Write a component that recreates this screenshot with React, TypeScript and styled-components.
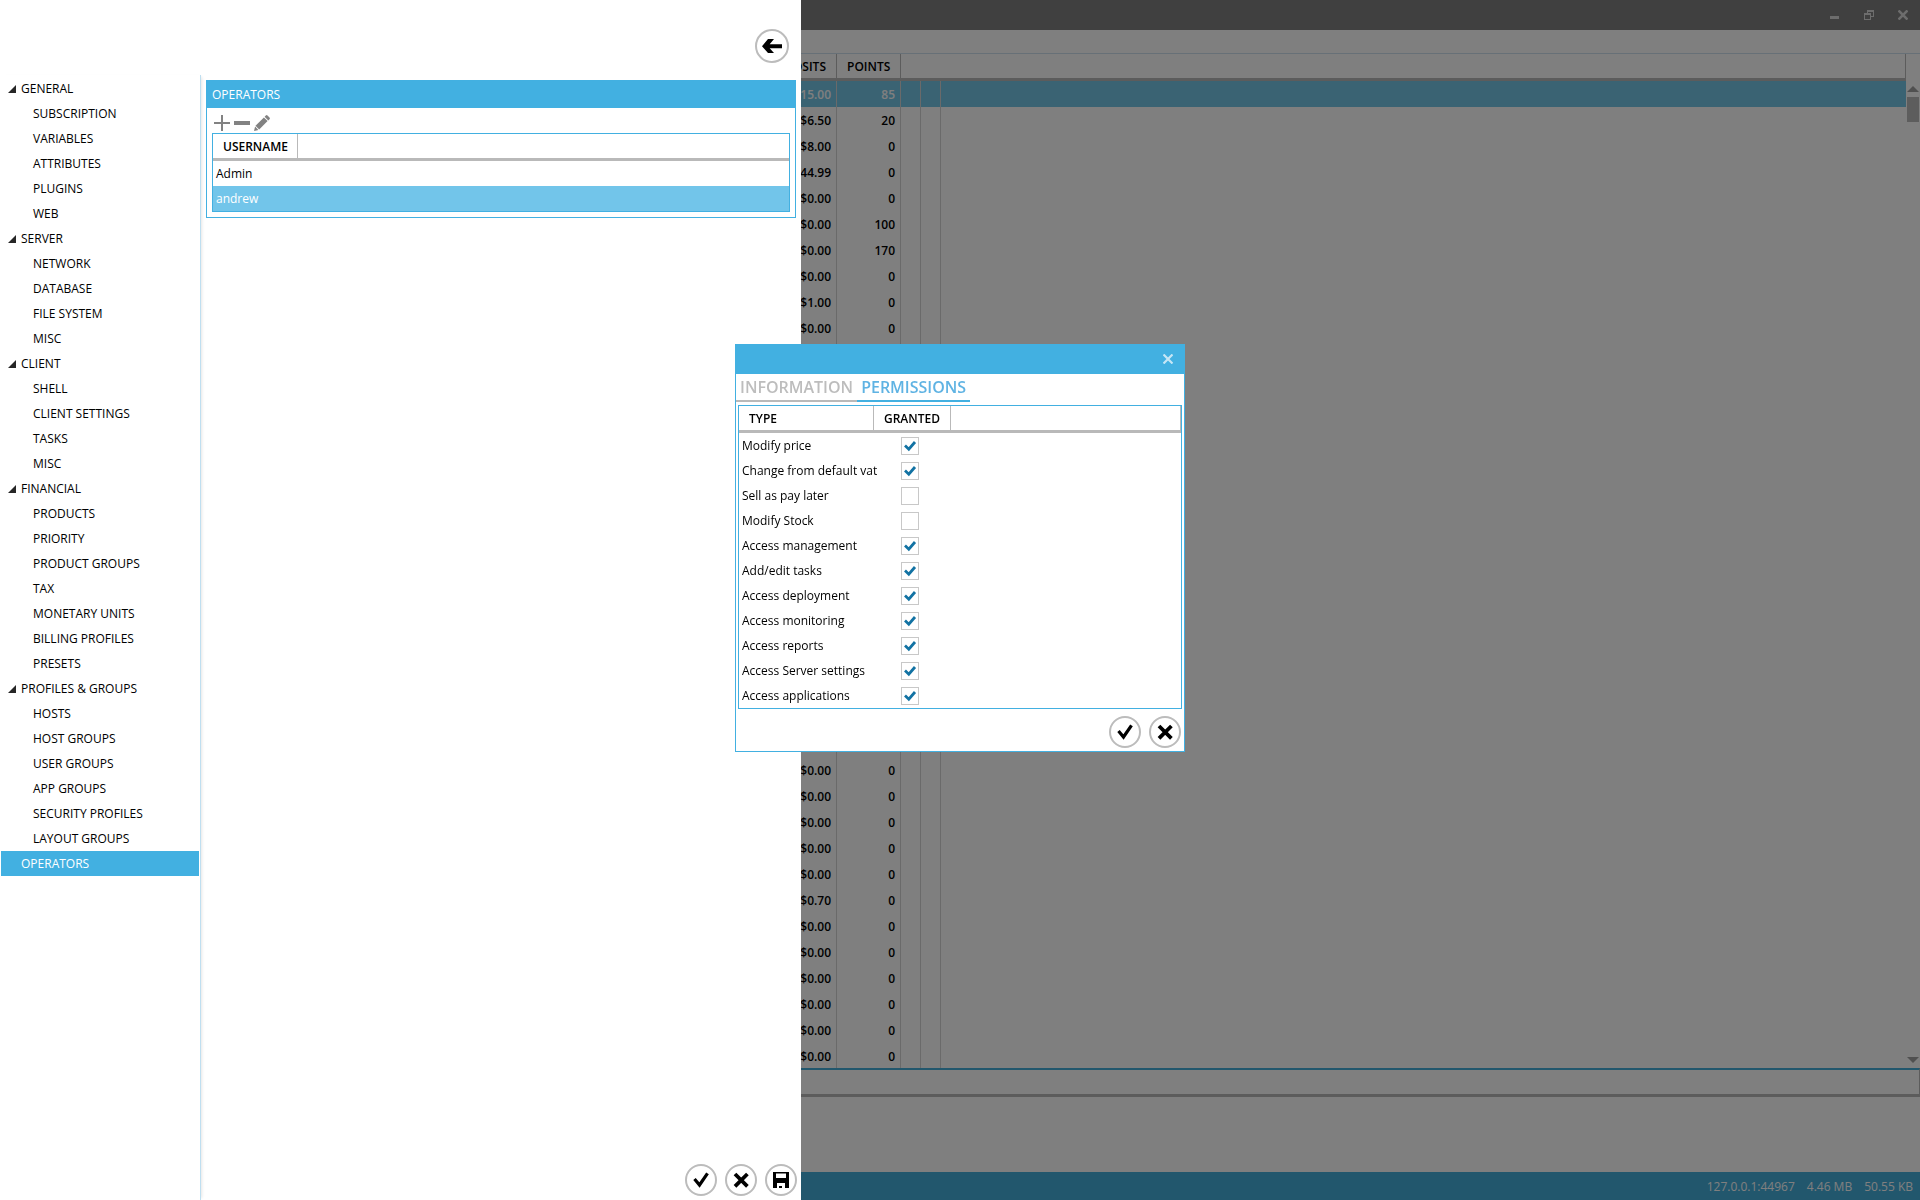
import React, { useState } from "react";
import styled, { createGlobalStyle, css } from "styled-components";

const blue = "#42b0e1";
const rule = "#b9b9b9";

const GlobalStyle = createGlobalStyle`
  *, *::before, *::after { box-sizing: border-box; }
  body {
    margin: 0;
    overflow: hidden;
    background: #fff;
    color: #000;
    font: 12px/16px "Open Sans", "Noto Sans", sans-serif;
  }
  button, input { font: inherit; margin: 0; }
  button { padding: 0; border: 0; background: none; color: inherit; cursor: pointer; }
  table { border-collapse: separate; border-spacing: 0; table-layout: fixed; width: 100%; }
  th, td { padding: 0; text-align: left; font-weight: 400; white-space: nowrap; }
  ul { list-style: none; margin: 0; padding: 0; }
  svg { display: block; }
`;

/* ---------- main window ---------- */

const Window = styled.div`
  display: flex;
  flex-direction: column;
  height: 100vh;
`;

const TitleBar = styled.header`
  display: flex;
  justify-content: flex-end;
  flex: none;
  height: 30px;
  background: #808080;
  color: #dadada;
`;

const CaptionButton = styled.button`
  display: grid;
  place-items: center;
  width: 34px;
`;

const Ribbon = styled.div`
  flex: none;
  height: 24px;
  border-bottom: 1px solid #cfe0ee;
`;

const GridArea = styled.main`
  display: flex;
  flex: 1;
  min-height: 0;
`;

const GridClip = styled.div`
  flex: 1;
  min-width: 0;
  overflow: hidden;
`;

const HeadCell = styled.th<{ $align?: string; $plain?: boolean }>`
  height: 27px;
  padding: 2px 10px 0;
  border-bottom: 3px solid ${rule};
  border-right: ${(p) => (p.$plain ? 0 : 1)}px solid ${rule};
  text-align: ${(p) => p.$align ?? "left"};
  font-weight: 600;
`;

const UserRow = styled.tr<{ $selected: boolean }>`
  height: 26px;
  font-weight: 600;
  ${(p) =>
    p.$selected &&
    css`
      background: #74c6e7;
      color: #fff;
    `}
`;

const UserCell = styled.td<{ $plain?: boolean }>`
  padding: 2px 5px 0;
  border-right: ${(p) => (p.$plain ? 0 : 1)}px solid #d4d4d4;
  text-align: right;
  font-weight: inherit;
`;

const ScrollBar = styled.div`
  display: flex;
  flex-direction: column;
  align-items: center;
  justify-content: space-between;
  width: 14px;
  padding: 32px 0 5px;
  color: #a0a0a0;
`;

const ScrollTop = styled.div`
  display: grid;
  gap: 5px;
`;

const Thumb = styled.div`
  width: 12px;
  height: 25px;
  background: #bbb;
`;

const TotalsBar = styled.div`
  flex: none;
  height: 29px;
  border-top: 2px solid #44aeda;
  border-right: 1px solid ${rule};
  border-bottom: 3px solid ${rule};
`;

const Footer = styled.div`
  flex: none;
  height: 75px;
`;

const StatusBar = styled.footer`
  display: flex;
  flex: none;
  align-items: center;
  justify-content: flex-end;
  gap: 12px;
  height: 28px;
  padding: 2px 7px 0;
  background: #44aeda;
  color: #fff;
`;

const Scrim = styled.div`
  position: fixed;
  inset: 0;
  background: rgba(0, 0, 0, 0.5);
`;

/* ---------- shared ---------- */

const RoundButton = styled.button<{ $size?: number }>`
  width: ${(p) => p.$size ?? 32}px;
  height: ${(p) => p.$size ?? 32}px;
  border-radius: 50%;
  background: #fff;
`;

const Actions = styled.div`
  display: flex;
  justify-content: flex-end;
  gap: 8px;
`;

const ListFrame = styled.div`
  border: 1px solid ${blue};
`;

const ListRow = styled.tr<{ $selected?: boolean }>`
  height: 25px;
  ${(p) =>
    p.$selected &&
    css`
      background: #72c5ea;
      color: #fff;
    `}
`;

const ListCell = styled.td`
  padding: 0 3px;
`;

/* ---------- settings drawer ---------- */

const Drawer = styled.section`
  position: fixed;
  top: 0;
  bottom: 0;
  left: 0;
  display: flex;
  flex-direction: column;
  width: 801px;
  background: #fff;
`;

const DrawerTop = styled.div`
  display: flex;
  justify-content: flex-end;
  flex: none;
  padding: 29px 12px 12px;
`;

const DrawerBody = styled.div`
  display: flex;
  flex: 1;
  min-height: 0;
`;

const Nav = styled.nav`
  flex: none;
  width: 201px;
  padding: 1px;
  border-right: 1px solid #bfdff0;
  box-shadow: 3px 0 3px -2px rgba(0, 0, 0, 0.1);
`;

const NavButton = styled.button<{ $child?: boolean; $selected?: boolean }>`
  display: flex;
  align-items: center;
  gap: 5px;
  width: 198px;
  height: 25px;
  padding-left: ${(p) => (p.$child ? 32 : 7)}px;
  text-align: left;
  background: ${(p) => (p.$selected ? blue : "none")};
  color: ${(p) => (p.$selected ? "#fff" : "inherit")};
`;

const ArrowSlot = styled.span`
  width: 8px;
`;

const Content = styled.div`
  display: flex;
  flex-direction: column;
  justify-content: space-between;
  flex: 1;
  padding: 5px 4px 4px 5px;
`;

const Group = styled.section`
  margin-right: 1px;
  border: 1px solid ${blue};
`;

const GroupTitle = styled.h2`
  margin: 0;
  padding: 5px;
  background: ${blue};
  color: #fff;
  font-size: 12px;
  line-height: 17px;
  font-weight: 400;
`;

const GroupBody = styled.div`
  padding: 7px 5px 5px;
`;

const Tools = styled.div`
  display: flex;
  gap: 4px;
  padding: 0 2px 2px;
  color: #828282;
`;

/* ---------- dialog ---------- */

const DialogLayer = styled.div`
  position: fixed;
  inset: 0;
  display: flex;
  align-items: center;
  justify-content: center;
  padding-bottom: 104px;
`;

const Dialog = styled.div`
  width: 450px;
  border: 1px solid ${blue};
  background: #fff;
`;

const DialogBar = styled.div`
  display: flex;
  justify-content: flex-end;
  height: 29px;
  background: ${blue};
  color: #c6e6f5;
`;

const CloseButton = styled.button`
  display: grid;
  place-items: center;
  width: 32px;
  height: 28px;
`;

const Tabs = styled.div`
  display: flex;
`;

const Tab = styled.button<{ $active?: boolean }>`
  height: 28px;
  padding: 0 4px;
  border-bottom: 2px solid ${(p) => (p.$active ? blue : rule)};
  color: ${(p) => (p.$active ? "#5fb3e3" : "#bdbdbd")};
  font-size: 16px;
  line-height: 20px;
  font-weight: 600;
`;

const DialogBody = styled.div`
  display: grid;
  gap: 7px;
  padding: 3px 2px;
`;

const DialogActions = styled(Actions)`
  padding-right: 1px;
`;

const CheckCell = styled.td`
  padding: 0 26px 0 27px;
`;

const CheckBox = styled.span`
  display: grid;
  width: 18px;
  height: 18px;
  > * {
    grid-area: 1 / 1;
  }
  input {
    appearance: none;
    width: 18px;
    height: 18px;
    border: 1px solid #c8c8c8;
    background: #fff;
  }
  svg {
    pointer-events: none;
    visibility: hidden;
  }
  input:checked + svg {
    visibility: visible;
  }
`;

/* ---------- icons ---------- */

const CircleIcon = ({ size = 32, children }: { size?: number; children: React.ReactNode }) => (
  <svg width={size} height={size} viewBox={`0 0 ${size} ${size}`} aria-hidden="true">
    <circle cx={size / 2} cy={size / 2} r={size / 2 - 1} fill="#fff" stroke="#bcbcbc" strokeWidth="2" />
    {children}
  </svg>
);

const AcceptIcon = () => (
  <CircleIcon>
    <path d="M9.5 15 14.5 21 22.5 9.3" fill="none" stroke="#000" strokeWidth="3.2" />
  </CircleIcon>
);

const CancelIcon = () => (
  <CircleIcon>
    <path d="M10 10 22.4 22.4M22.4 10 10 22.4" fill="none" stroke="#000" strokeWidth="3.8" />
  </CircleIcon>
);

const SaveIcon = () => (
  <CircleIcon>
    <path
      fillRule="evenodd"
      d="M8 8h16v16H8zM11 9.5v4.5h10V9.5zM12 19v5h8v-5z"
      fill="#000"
    />
    <path d="M14 22h3v2h-3z" fill="#000" />
  </CircleIcon>
);

const BackIcon = () => (
  <CircleIcon size={34}>
    <path d="M7 17.2 13 10h6l-4.3 5.2H27v4H14.7L19 24h-6z" fill="#000" />
  </CircleIcon>
);

const Cross = ({ width = 2.6 }: { width?: number }) => (
  <svg width="10" height="10" viewBox="0 0 10 10" aria-hidden="true">
    <path d="M.5 .5l9 9M9.5 .5l-9 9" stroke="currentColor" strokeWidth={width} />
  </svg>
);

const Triangle = ({ down }: { down?: boolean }) => (
  <svg width="12" height="6" viewBox="0 0 12 6" aria-hidden="true">
    <path d={down ? "M0 0h12L6 6z" : "M0 6h12L6 0z"} fill="currentColor" />
  </svg>
);

/* ---------- data ---------- */

const sections = [
  { name: "GENERAL", items: ["SUBSCRIPTION", "VARIABLES", "ATTRIBUTES", "PLUGINS", "WEB"] },
  { name: "SERVER", items: ["NETWORK", "DATABASE", "FILE SYSTEM", "MISC"] },
  { name: "CLIENT", items: ["SHELL", "CLIENT SETTINGS", "TASKS", "MISC"] },
  {
    name: "FINANCIAL",
    items: ["PRODUCTS", "PRIORITY", "PRODUCT GROUPS", "TAX", "MONETARY UNITS", "BILLING PROFILES", "PRESETS"],
  },
  {
    name: "PROFILES & GROUPS",
    items: ["HOSTS", "HOST GROUPS", "USER GROUPS", "APP GROUPS", "SECURITY PROFILES", "LAYOUT GROUPS"],
  },
];

type User = [deposits: string, points: string];

const repeat = (count: number, user: User): User[] => Array.from({ length: count }, () => user);

const users: User[] = [
  ["$15.00", "85"],
  ["$6.50", "20"],
  ["$8.00", "0"],
  ["$44.99", "0"],
  ["$0.00", "0"],
  ["$0.00", "100"],
  ["$0.00", "170"],
  ["$0.00", "0"],
  ["$1.00", "0"],
  ["$0.00", "0"],
  ...repeat(16, ["", ""]),
  ...repeat(5, ["$0.00", "0"]),
  ["$0.70", "0"],
  ...repeat(6, ["$0.00", "0"]),
];

const initialPermissions = [
  { name: "Modify price", granted: true },
  { name: "Change from default vat", granted: true },
  { name: "Sell as pay later", granted: false },
  { name: "Modify Stock", granted: false },
  { name: "Access management", granted: true },
  { name: "Add/edit tasks", granted: true },
  { name: "Access deployment", granted: true },
  { name: "Access monitoring", granted: true },
  { name: "Access reports", granted: true },
  { name: "Access Server settings", granted: true },
  { name: "Access applications", granted: true },
];

/* ---------- views ---------- */

const MainWindow = () => (
  <Window>
    <TitleBar>
      <CaptionButton aria-label="Minimize">
        <svg width="10" height="10" viewBox="0 0 10 10" aria-hidden="true">
          <path d="M0 6h9v3H0z" fill="currentColor" />
        </svg>
      </CaptionButton>
      <CaptionButton aria-label="Restore">
        <svg width="10" height="10" viewBox="0 0 10 10" aria-hidden="true">
          <path
            fillRule="evenodd"
            d="M3 0h7v7H7V6h2V2H4v1H3zM0 3h7v7H0zM1 5v4h5V5z"
            fill="currentColor"
          />
        </svg>
      </CaptionButton>
      <CaptionButton aria-label="Close window">
        <Cross />
      </CaptionButton>
    </TitleBar>
    <Ribbon />
    <GridArea>
      <GridClip>
        <table>
          <colgroup>
            <col style={{ width: 837 }} />
            <col style={{ width: 64 }} />
            <col style={{ width: 20 }} />
            <col style={{ width: 20 }} />
            <col />
          </colgroup>
          <thead>
            <tr>
              <HeadCell $align="right">DEPOSITS</HeadCell>
              <HeadCell>POINTS</HeadCell>
              <HeadCell colSpan={3} />
            </tr>
          </thead>
          <tbody>
            {users.map(([deposits, points], i) => (
              <UserRow key={i} $selected={i === 0}>
                <UserCell>{deposits}</UserCell>
                <UserCell>{points}</UserCell>
                <UserCell />
                <UserCell />
                <UserCell $plain />
              </UserRow>
            ))}
          </tbody>
        </table>
      </GridClip>
      <ScrollBar>
        <ScrollTop>
          <Triangle />
          <Thumb />
        </ScrollTop>
        <Triangle down />
      </ScrollBar>
    </GridArea>
    <TotalsBar />
    <Footer />
    <StatusBar>
      <span>127.0.0.1:44967</span>
      <span>4.46 MB</span>
      <span>50.55 KB</span>
    </StatusBar>
  </Window>
);

const Settings = () => (
  <Drawer>
    <DrawerTop>
      <RoundButton $size={34} aria-label="Back">
        <BackIcon />
      </RoundButton>
    </DrawerTop>
    <DrawerBody>
      <Nav>
        <ul>
          {sections.map((section) => (
            <li key={section.name}>
              <NavButton>
                <ArrowSlot>
                  <svg width="8" height="8" viewBox="0 0 8 8" aria-hidden="true">
                    <path d="M8 0v8H0z" fill="#262626" />
                  </svg>
                </ArrowSlot>
                {section.name}
              </NavButton>
              <ul>
                {section.items.map((item) => (
                  <li key={item}>
                    <NavButton $child>{item}</NavButton>
                  </li>
                ))}
              </ul>
            </li>
          ))}
          <li>
            <NavButton $selected>
              <ArrowSlot />
              OPERATORS
            </NavButton>
          </li>
        </ul>
      </Nav>
      <Content>
        <Group>
          <GroupTitle>OPERATORS</GroupTitle>
          <GroupBody>
            <Tools>
              <button aria-label="Add">
                <svg width="16" height="16" viewBox="0 0 16 16" aria-hidden="true">
                  <path d="M7 0h2v7h7v2H9v7H7V9H0V7h7z" fill="currentColor" />
                </svg>
              </button>
              <button aria-label="Remove">
                <svg width="16" height="16" viewBox="0 0 16 16" aria-hidden="true">
                  <path d="M0 6h16v4H0z" fill="currentColor" />
                </svg>
              </button>
              <button aria-label="Edit">
                <svg width="16" height="16" viewBox="0 0 16 16" aria-hidden="true">
                  <path
                    d="M0 16l1.1-4.4 3.3 3.3zM1.5 10.8 9.9 2.4l3.7 3.7-8.4 8.4zM10.6 1.7l1.2-1.2q.8-.8 1.7 0l2 2q.8.9 0 1.7l-1.2 1.2z"
                    fill="currentColor"
                  />
                </svg>
              </button>
            </Tools>
            <ListFrame>
              <table>
                <colgroup>
                  <col style={{ width: 85 }} />
                  <col />
                </colgroup>
                <thead>
                  <tr>
                    <HeadCell>USERNAME</HeadCell>
                    <HeadCell $plain />
                  </tr>
                </thead>
                <tbody>
                  <ListRow>
                    <ListCell colSpan={2}>Admin</ListCell>
                  </ListRow>
                  <ListRow $selected>
                    <ListCell colSpan={2}>andrew</ListCell>
                  </ListRow>
                </tbody>
              </table>
            </ListFrame>
          </GroupBody>
        </Group>
        <Actions>
          <RoundButton aria-label="Apply">
            <AcceptIcon />
          </RoundButton>
          <RoundButton aria-label="Cancel">
            <CancelIcon />
          </RoundButton>
          <RoundButton aria-label="Save">
            <SaveIcon />
          </RoundButton>
        </Actions>
      </Content>
    </DrawerBody>
  </Drawer>
);

const OperatorDialog = () => {
  const [permissions, setPermissions] = useState(initialPermissions);
  const toggle = (index: number) =>
    setPermissions((list) => list.map((p, i) => (i === index ? { ...p, granted: !p.granted } : p)));

  return (
    <DialogLayer>
      <Dialog role="dialog" aria-label="Operator">
        <DialogBar>
          <CloseButton aria-label="Close">
            <Cross width={2.2} />
          </CloseButton>
        </DialogBar>
        <Tabs role="tablist">
          <Tab role="tab" aria-selected="false">
            INFORMATION
          </Tab>
          <Tab role="tab" aria-selected="true" $active>
            PERMISSIONS
          </Tab>
        </Tabs>
        <DialogBody>
          <ListFrame>
            <table>
              <colgroup>
                <col style={{ width: 135 }} />
                <col style={{ width: 77 }} />
                <col />
              </colgroup>
              <thead>
                <tr>
                  <HeadCell>TYPE</HeadCell>
                  <HeadCell>GRANTED</HeadCell>
                  <HeadCell />
                </tr>
              </thead>
              <tbody>
                {permissions.map((permission, i) => (
                  <ListRow key={permission.name}>
                    <ListCell>
                      <label htmlFor={`permission-${i}`}>{permission.name}</label>
                    </ListCell>
                    <CheckCell>
                      <CheckBox>
                        <input
                          id={`permission-${i}`}
                          type="checkbox"
                          checked={permission.granted}
                          onChange={() => toggle(i)}
                        />
                        <svg width="18" height="18" viewBox="0 0 18 18" aria-hidden="true">
                          <path d="M4 8.6 7.8 12.2 14 5" fill="none" stroke="#1272a3" strokeWidth="2.8" />
                        </svg>
                      </CheckBox>
                    </CheckCell>
                    <td />
                  </ListRow>
                ))}
              </tbody>
            </table>
          </ListFrame>
          <DialogActions>
            <RoundButton aria-label="OK">
              <AcceptIcon />
            </RoundButton>
            <RoundButton aria-label="Discard">
              <CancelIcon />
            </RoundButton>
          </DialogActions>
        </DialogBody>
      </Dialog>
    </DialogLayer>
  );
};

export default function App() {
  return (
    <>
      <GlobalStyle />
      <MainWindow />
      <Scrim />
      <Settings />
      <OperatorDialog />
    </>
  );
}
